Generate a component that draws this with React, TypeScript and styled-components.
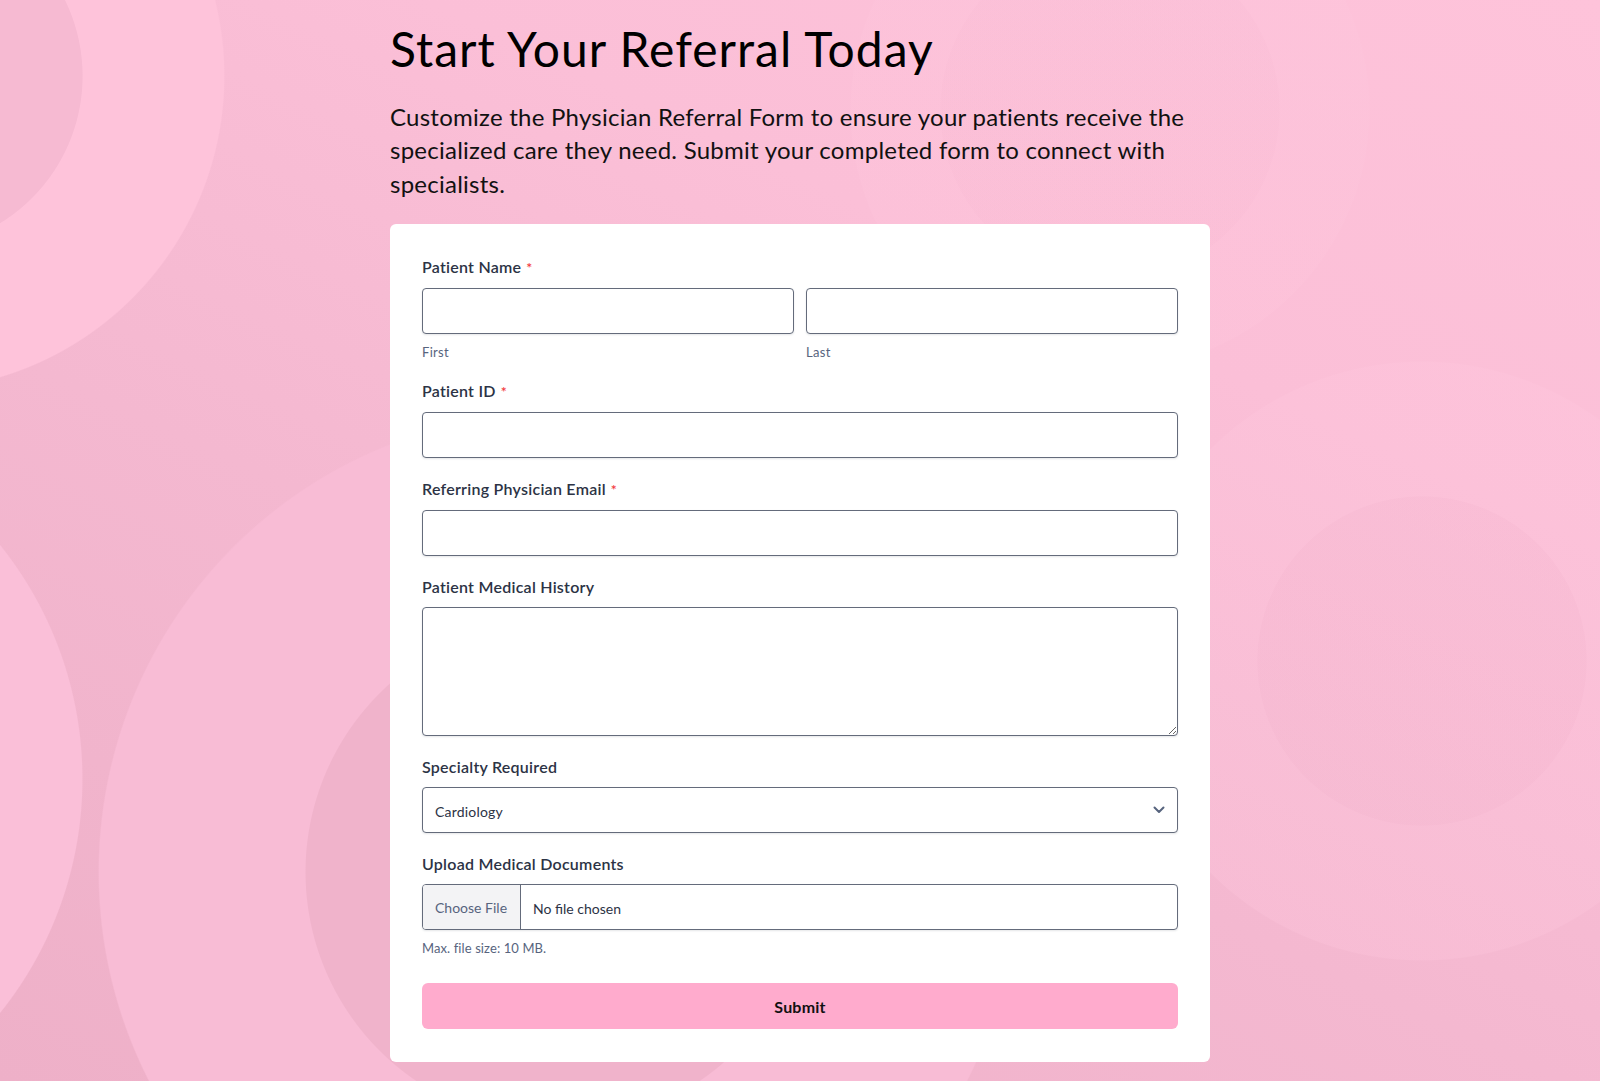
import React from 'react'
import styled, { createGlobalStyle } from 'styled-components'

// global reset
const GlobalStyle = createGlobalStyle`
    * {
        box-sizing: border-box;
    }
    html, body {
        margin: 0;
        padding: 0;
    }
    body {
        font-family: Lato, "Open Sans", Arial, sans-serif;
        color: #2c3345;
    }
`;

// soft concentric ripples behind the form
const Page = styled.div`
    min-height: 100vh;
    display: flex;
    flex-direction: column;
    align-items: center;
    padding: 20px 0 18px;
    background:
        radial-gradient(circle 253px at 558px 872px, #f0b3cb 99.6%, transparent 100%),
        radial-gradient(circle 460px at 558px 872px, #f8bcd5 99.7%, transparent 100%),
        radial-gradient(circle 374px at -291px 779px, #fabfd8 99.7%, transparent 100%),
        radial-gradient(circle 173px at -90px 76px, #f6bad2 99.5%, transparent 100%),
        radial-gradient(circle 315px at -90px 76px, #fec3da 99.6%, transparent 100%),
        radial-gradient(circle 165px at 1422px 661px, rgba(236, 168, 196, 0.14) 99.5%, transparent 100%),
        radial-gradient(circle 300px at 1422px 661px, rgba(255, 200, 222, 0.28) 99.6%, transparent 100%),
        radial-gradient(circle 170px at 1110px 110px, rgba(236, 168, 196, 0.08) 99.5%, transparent 100%),
        radial-gradient(circle 260px at 1110px 110px, rgba(255, 200, 222, 0.22) 99.6%, transparent 100%),
        linear-gradient(205deg, #fec3da 0%, #fbbfd7 30%, #f4b8d0 60%, #eeb0c8 100%);
`;

const Content = styled.div`
    width: 820px;
    display: flex;
    flex-direction: column;
`;

const Title = styled.h1`
    margin: 0;
    font-size: 48px;
    line-height: 1.2;
    font-weight: 400;
    letter-spacing: 1px;
    color: #000;
`;

const Intro = styled.p`
    margin: 22px 0 24px;
    font-size: 24px;
    line-height: 1.4;
    font-weight: 400;
    letter-spacing: 0.25px;
    color: #111;
`;

const Card = styled.form`
    background: #fff;
    border-radius: 6px;
    padding: 33px 32px 33px;
    display: flex;
    flex-direction: column;
    gap: 21px;
`;

const Field = styled.div`
    display: flex;
    flex-direction: column;
`;

const Label = styled.label`
    display: block;
    font-size: 16px;
    line-height: 20px;
    font-weight: 600;
    letter-spacing: 0.25px;
    color: #2c3345;
    margin-bottom: 10px;
`;

const Required = styled.span`
    color: #f23a3c;
    font-size: 14px;
    margin-left: 5px;
`;

const NameRow = styled.div`
    display: grid;
    grid-template-columns: 1fr 1fr;
    gap: 12px;
`;

const SubField = styled.div`
    display: flex;
    flex-direction: column;
    gap: 10px;
`;

const SubLabel = styled.span`
    font-size: 13px;
    line-height: 16px;
    letter-spacing: 0.3px;
    color: #57647e;
`;

const inputBase = `
    width: 100%;
    border: 1px solid #646b7b;
    border-radius: 4px;
    background: #fff;
    box-shadow: 0 1px 2px rgba(43, 50, 69, 0.12);
    font-family: Lato, "Open Sans", Arial, sans-serif;
    font-size: 14px;
    color: #2c3345;
    outline: none;
`;

const TextInput = styled.input`
    ${inputBase}
    height: 46px;
    padding: 0 12px;
`;

const TextArea = styled.textarea`
    ${inputBase}
    height: 129px;
    padding: 10px 12px;
    resize: vertical;
    display: block;
`;

const SelectBox = styled.div`
    ${inputBase}
    height: 46px;
    padding: 0 12px;
    display: flex;
    align-items: center;
    justify-content: space-between;
`;

const SelectValue = styled.span`
    font-size: 14px;
    letter-spacing: 0.2px;
    color: #2c3345;
    padding-top: 2px;
`;

const FileBox = styled.div`
    ${inputBase}
    height: 46px;
    display: flex;
    align-items: stretch;
    overflow: hidden;
`;

const FileButton = styled.span`
    display: flex;
    align-items: center;
    padding: 0 12px;
    width: 98px;
    background: #f3f3f5;
    border-right: 1px solid #646b7b;
    font-size: 14px;
    color: #57647e;
`;

const FileName = styled.span`
    display: flex;
    align-items: center;
    padding: 2px 12px 0;
    font-size: 14px;
    color: #2c3345;
`;

const Hint = styled.span`
    margin-top: 10px;
    font-size: 13px;
    line-height: 16px;
    letter-spacing: 0.1px;
    color: #57647e;
`;

const SubmitButton = styled.button`
    margin-top: 6px;
    height: 46px;
    width: 100%;
    border: none;
    border-radius: 6px;
    background: #ffabcd;
    font-family: Lato, "Open Sans", Arial, sans-serif;
    font-size: 16px;
    font-weight: 700;
    letter-spacing: 0.2px;
    color: #111;
    cursor: pointer;
`;

const Chevron = () => (
    <svg width="12" height="8" viewBox="0 0 12 8" fill="none">
        <path d="M1.5 1.5L6 6l4.5-4.5" stroke="#57647e" strokeWidth="2" strokeLinecap="round" strokeLinejoin="round" />
    </svg>
);

const App: React.FC = () => {
    return (
        <>
            <GlobalStyle />
            <Page>
                <Content>
                    <Title>Start Your Referral Today</Title>
                    <Intro>
                        Customize the Physician Referral Form to ensure your patients receive the specialized care they need. Submit your completed form to connect with specialists.
                    </Intro>
                    <Card onSubmit={(e) => e.preventDefault()}>
                        <Field>
                            <Label>Patient Name<Required>*</Required></Label>
                            <NameRow>
                                <SubField>
                                    <TextInput type="text" />
                                    <SubLabel>First</SubLabel>
                                </SubField>
                                <SubField>
                                    <TextInput type="text" />
                                    <SubLabel>Last</SubLabel>
                                </SubField>
                            </NameRow>
                        </Field>
                        <Field>
                            <Label>Patient ID<Required>*</Required></Label>
                            <TextInput type="text" />
                        </Field>
                        <Field>
                            <Label>Referring Physician Email<Required>*</Required></Label>
                            <TextInput type="email" />
                        </Field>
                        <Field>
                            <Label>Patient Medical History</Label>
                            <TextArea />
                        </Field>
                        <Field>
                            <Label>Specialty Required</Label>
                            <SelectBox>
                                <SelectValue>Cardiology</SelectValue>
                                <Chevron />
                            </SelectBox>
                        </Field>
                        <Field>
                            <Label>Upload Medical Documents</Label>
                            <FileBox>
                                <FileButton>Choose File</FileButton>
                                <FileName>No file chosen</FileName>
                            </FileBox>
                            <Hint>Max. file size: 10 MB.</Hint>
                        </Field>
                        <SubmitButton type="submit">Submit</SubmitButton>
                    </Card>
                </Content>
            </Page>
        </>
    )
}

export default App
